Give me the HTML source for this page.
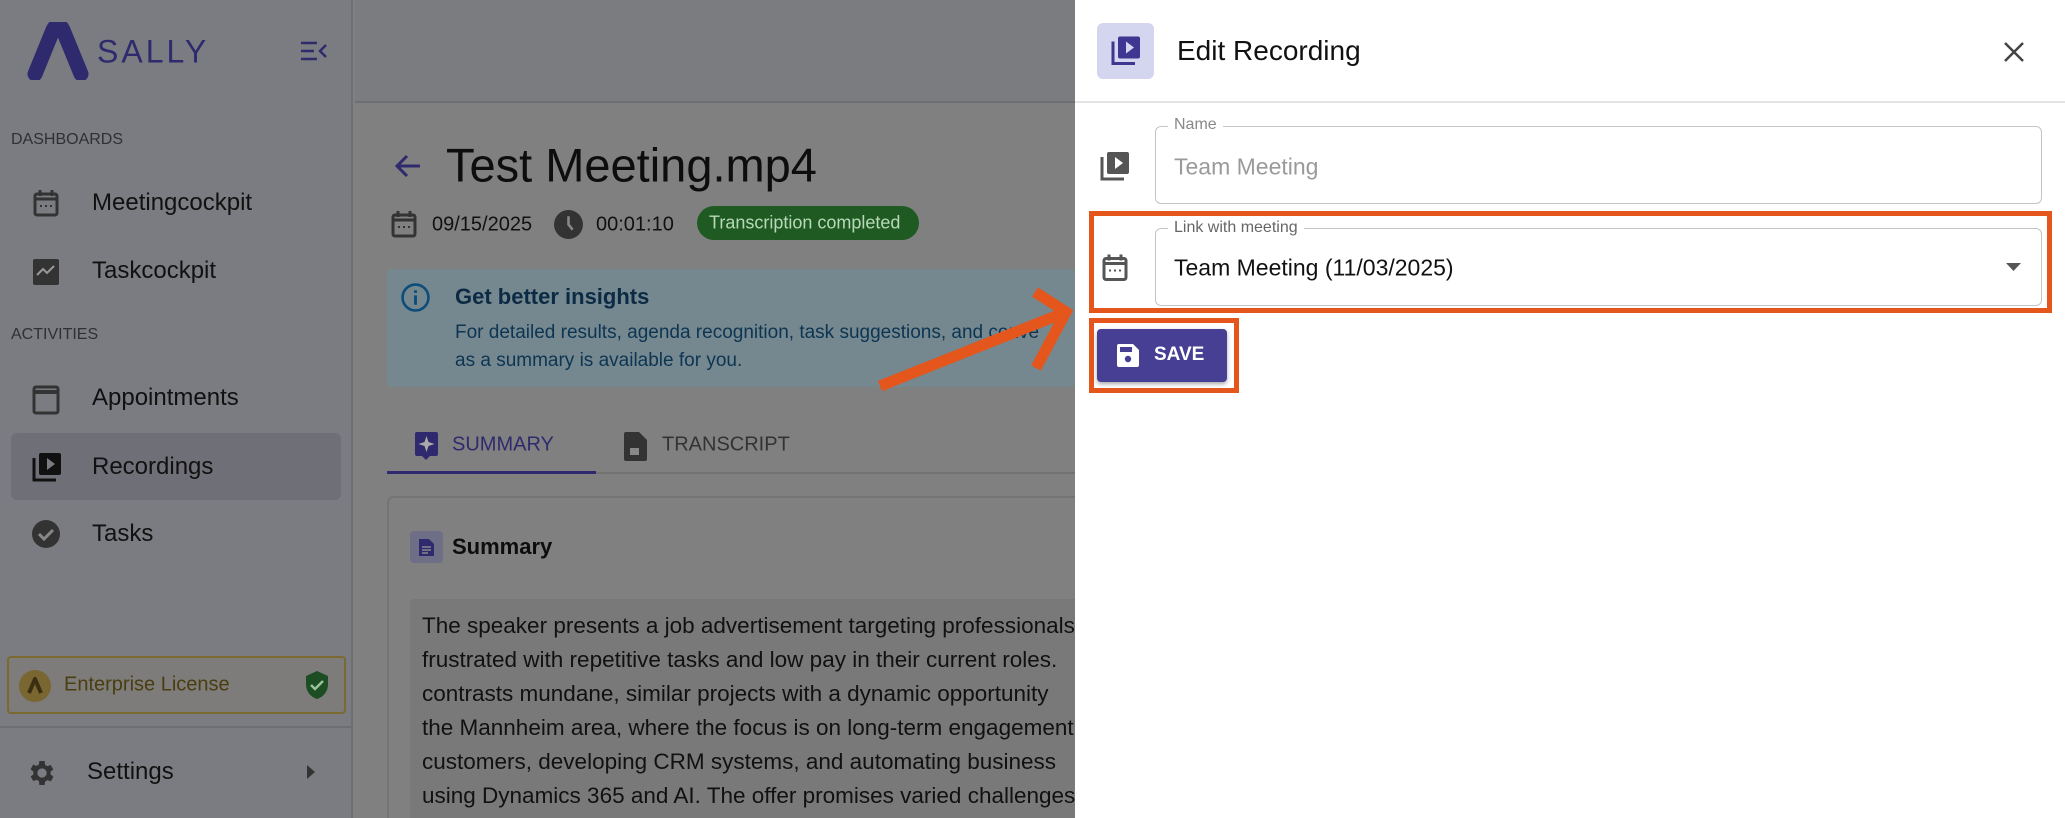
<!DOCTYPE html>
<html style="width:2065px;height:818px;overflow:hidden"><head><meta charset="utf-8"><style>
*{margin:0;padding:0;box-sizing:border-box}
body{width:2065px;height:818px;overflow:hidden;font-family:"Liberation Sans",sans-serif;background:#808080;position:relative}
.abs{position:absolute}
.side{left:0;top:0;width:353px;height:818px;background:#7b7c81;border-right:2px solid #6e6f72}
.top{left:355px;top:0;width:720px;height:103px;background:#7b7c80;border-bottom:2px solid #6e6f72}
.t{position:absolute;white-space:nowrap;transform:translateY(-50%)}
.nav{font-size:24px;color:#111}
.sec{font-size:16px;color:#2f3033}
.panel{left:1075px;top:0;width:990px;height:818px;background:#fff}
</style></head><body>
<div class="abs side"></div>
<div class="abs top"></div>
<svg class="abs" style="left:27px;top:22px" width="62" height="58" viewBox="0 0 62 58"><path d="M8 52 L26 8 Q31 -2 36 8 L54 52" fill="none" stroke="#2f2a6e" stroke-width="15" stroke-linecap="round" stroke-linejoin="round"/></svg>
<div class="t" style="left:97px;top:52px;font-size:32px;color:#2f2a6e;letter-spacing:3px">SALLY</div>
<svg class="abs" style="left:300px;top:41px" width="28" height="20" viewBox="0 0 28 20"><path d="M1 2h16M1 10h13M1 18h16M26 4l-6 6 6 6" stroke="#2f2a6e" stroke-width="2.5" fill="none"/></svg>
<div class="t sec" style="left:11px;top:140px">DASHBOARDS</div>
<svg class="abs" style="left:33px;top:189px" width="26" height="28" viewBox="0 0 26 28"><rect x="2" y="5" width="22" height="21" rx="2" fill="none" stroke="#333" stroke-width="3"/><path d="M7 1v6M19 1v6M2 10h22" stroke="#333" stroke-width="3"/><path d="M7 17h2M12 17h2M17 17h2" stroke="#333" stroke-width="2"/></svg>
<div class="t nav" style="left:92px;top:203px">Meetingcockpit</div>
<svg class="abs" style="left:33px;top:259px" width="26" height="26" viewBox="0 0 26 26"><rect width="26" height="26" rx="2" fill="#333"/><path d="M4 16l6-6 4 4 7-7" stroke="#999" stroke-width="2" fill="none"/></svg>
<div class="t nav" style="left:92px;top:271px">Taskcockpit</div>
<div class="t sec" style="left:11px;top:335px">ACTIVITIES</div>
<svg class="abs" style="left:32px;top:383px" width="28" height="32" viewBox="0 0 28 32"><rect x="2" y="4" width="24" height="26" rx="2" fill="none" stroke="#333" stroke-width="3"/><path d="M2 9h24" stroke="#333" stroke-width="4"/></svg>
<div class="t nav" style="left:92px;top:398px">Appointments</div>
<div class="abs" style="left:11px;top:433px;width:330px;height:67px;background:#6f6f78;border-radius:6px"></div>
<svg class="abs" style="left:32px;top:452px" width="30" height="30" viewBox="0 0 30 30"><path d="M2 6v22h22" stroke="#111" stroke-width="3" fill="none"/><rect x="7" y="1" width="22" height="22" rx="2" fill="#111"/><path d="M15 6l8 6-8 6z" fill="#7b7c81"/></svg>
<div class="t nav" style="left:92px;top:467px">Recordings</div>
<svg class="abs" style="left:32px;top:520px" width="28" height="28" viewBox="0 0 28 28"><circle cx="14" cy="14" r="14" fill="#333"/><path d="M7 14l5 5 9-9" stroke="#888" stroke-width="3" fill="none"/></svg>
<div class="t nav" style="left:92px;top:534px">Tasks</div>
<div class="abs" style="left:7px;top:656px;width:339px;height:58px;border:2px solid #7a6a30;border-radius:4px;background:#7d7c7a"></div>
<svg class="abs" style="left:19px;top:670px" width="32" height="32" viewBox="0 0 32 32"><circle cx="16" cy="16" r="16" fill="#7a6630"/><path d="M10 23l6-14 6 14" stroke="#3a2f10" stroke-width="4" fill="none" stroke-linejoin="round"/></svg>
<div class="t" style="left:64px;top:685px;font-size:20px;color:#4a3d10">Enterprise License</div>
<svg class="abs" style="left:305px;top:670px" width="24" height="30" viewBox="0 0 24 30"><path d="M12 1L1 6v8c0 8 5 13 11 15 6-2 11-7 11-15V6z" fill="#1d4d22"/><path d="M6 15l4 4 8-8" stroke="#9ac29c" stroke-width="2.5" fill="none"/></svg>
<div class="abs" style="left:0;top:726px;width:353px;height:2px;background:#6e6f72"></div>
<svg class="abs" style="left:26px;top:757px" width="32" height="32" viewBox="0 0 24 24"><path fill="#333" d="M19.4 13a7.5 7.5 0 000-2l2.1-1.6-2-3.5-2.5 1a7 7 0 00-1.7-1L15 3h-4l-.4 2.7a7 7 0 00-1.7 1l-2.5-1-2 3.5L6.6 11a7.5 7.5 0 000 2l-2.1 1.6 2 3.5 2.5-1a7 7 0 001.7 1L11 21h4l.4-2.7a7 7 0 001.7-1l2.5 1 2-3.5zM13 15.5a3.5 3.5 0 110-7 3.5 3.5 0 010 7z" transform="translate(-1 0)"/></svg>
<div class="t nav" style="left:87px;top:772px">Settings</div>
<svg class="abs" style="left:306px;top:764px" width="10" height="16" viewBox="0 0 10 16"><path d="M1 1l8 7-8 7z" fill="#333"/></svg>

<svg class="abs" style="left:394px;top:153px" width="28" height="26" viewBox="0 0 28 26"><path d="M26 13H4M13 3L3 13l10 10" stroke="#2f2a6e" stroke-width="3" fill="none"/></svg>
<div class="t" style="left:446px;top:165px;font-size:47px;color:#0d0d0d">Test Meeting.mp4</div>
<svg class="abs" style="left:391px;top:210px" width="26" height="28" viewBox="0 0 26 28"><rect x="2" y="5" width="22" height="21" rx="2" fill="none" stroke="#333" stroke-width="3"/><path d="M7 1v6M19 1v6M2 10h22" stroke="#333" stroke-width="3"/><path d="M7 17h2M12 17h2M17 17h2" stroke="#333" stroke-width="2"/></svg>
<div class="t" style="left:432px;top:225px;font-size:20px;color:#111">09/15/2025</div>
<svg class="abs" style="left:554px;top:210px" width="29" height="29" viewBox="0 0 28 28"><circle cx="14" cy="14" r="14" fill="#333"/><path d="M14 6v8l4 5" stroke="#888" stroke-width="2.5" fill="none"/></svg>
<div class="t" style="left:596px;top:225px;font-size:20px;color:#111">00:01:10</div>
<div class="abs" style="left:697px;top:206px;width:222px;height:34px;border-radius:17px;background:#1f5a22"></div>
<div class="t" style="left:709px;top:223px;font-size:18px;color:#b7d9b9">Transcription completed</div>
<div class="abs" style="left:387px;top:269px;width:688px;height:118px;background:#75878f;border-radius:4px"></div>
<svg class="abs" style="left:401px;top:283px" width="29" height="29" viewBox="0 0 28 28"><circle cx="14" cy="14" r="12.5" fill="none" stroke="#0d4d7a" stroke-width="2.5"/><path d="M14 12v9M14 7v2.5" stroke="#0d4d7a" stroke-width="2.8"/></svg>
<div class="t" style="left:455px;top:297px;font-size:22px;font-weight:bold;color:#0b2a44">Get better insights</div>
<div class="t" style="left:455px;top:333px;font-size:19px;color:#0d3552">For detailed results, agenda recognition, task suggestions, and conve</div>
<div class="t" style="left:455px;top:361px;font-size:19px;color:#0d3552">as a summary is available for you.</div>
<svg class="abs" style="left:414px;top:431px" width="25" height="30" viewBox="0 0 25 30"><path d="M3 1h19a2 2 0 012 2v20a2 2 0 01-2 2h-6l-4 4-4-4H3a2 2 0 01-2-2V3a2 2 0 012-2z" fill="#2f2a6e"/><path d="M12.5 5l2 6 6 2-6 2-2 6-2-6-6-2 6-2z" fill="#aaa"/></svg>
<div class="t" style="left:452px;top:445px;font-size:20px;color:#2f2a6e">SUMMARY</div>
<svg class="abs" style="left:624px;top:431px" width="24" height="30" viewBox="0 0 24 30"><path d="M2 1h13l8 8v19a2 2 0 01-2 2H2a2 2 0 01-2-2V3a2 2 0 012-2z" fill="#333"/><rect x="6" y="17" width="9" height="7" fill="#888"/></svg>
<div class="t" style="left:662px;top:445px;font-size:20px;color:#333">TRANSCRIPT</div>
<div class="abs" style="left:387px;top:472px;width:688px;height:2px;background:#737373"></div>
<div class="abs" style="left:387px;top:471px;width:209px;height:3px;background:#2f2a6e"></div>
<div class="abs" style="left:387px;top:496px;width:700px;height:322px;border:2px solid #747474;border-bottom:none;border-radius:6px 6px 0 0;background:#808080"></div>
<div class="abs" style="left:410px;top:531px;width:33px;height:32px;background:#6e6e86;border-radius:4px"></div>
<svg class="abs" style="left:418px;top:538px" width="17" height="19" viewBox="0 0 17 19"><path d="M1 1h10l5 5v12H1z" fill="#2f2a6e"/><path d="M4 9h9M4 12h9M4 15h6" stroke="#888" stroke-width="1.5"/></svg>
<div class="t" style="left:452px;top:547px;font-size:22px;font-weight:bold;color:#0d0d0d">Summary</div>
<div class="abs" style="left:410px;top:599px;width:680px;height:219px;background:#797979;border-radius:4px 4px 0 0"></div>
<div class="abs" style="left:422px;top:609px;font-size:22.5px;line-height:34px;color:#111;white-space:nowrap">The speaker presents a job advertisement targeting professionals<br>frustrated with repetitive tasks and low pay in their current roles.<br>contrasts mundane, similar projects with a dynamic opportunity<br>the Mannheim area, where the focus is on long-term engagement<br>customers, developing CRM systems, and automating business<br>using Dynamics 365 and AI. The offer promises varied challenges</div>

<svg class="abs" style="left:860px;top:280px" width="220" height="120" viewBox="860 280 220 120"><path d="M880 386L1066 312M1035 292L1066 312L1036 368" stroke="#e4561b" stroke-width="11" fill="none" stroke-linecap="butt"/></svg>

<div class="abs panel"></div>
<div class="abs" style="left:1097px;top:23px;width:57px;height:56px;background:#d4d6f0;border-radius:6px"></div>
<svg class="abs" style="left:1111px;top:35px" width="30" height="31" viewBox="0 0 30 30"><path d="M2 6v22h22" stroke="#3d3791" stroke-width="3" fill="none"/><rect x="7" y="1" width="22" height="22" rx="2" fill="#3d3791"/><path d="M15 6l8 6-8 6z" fill="#d4d6f0"/></svg>
<div class="t" style="left:1177px;top:51px;font-size:28px;color:#111">Edit Recording</div>
<svg class="abs" style="left:2003px;top:41px" width="22" height="22" viewBox="0 0 22 22"><path d="M2 2l18 18M20 2L2 20" stroke="#444" stroke-width="2.5"/></svg>
<div class="abs" style="left:1075px;top:101px;width:990px;height:2px;background:#e4e4e4"></div>

<svg class="abs" style="left:1100px;top:151px" width="30" height="30" viewBox="0 0 30 30"><path d="M2 6v22h22" stroke="#555" stroke-width="3" fill="none"/><rect x="7" y="1" width="22" height="22" rx="2" fill="#555"/><path d="M15 6l8 6-8 6z" fill="#fff"/></svg>
<div class="abs" style="left:1155px;top:126px;width:887px;height:78px;border:1.5px solid #c4c4c4;border-radius:6px"></div>
<div class="t" style="left:1168px;top:125px;font-size:16px;color:#888;background:#fff;padding:0 6px">Name</div>
<div class="t" style="left:1174px;top:167px;font-size:23px;color:#9a9a9a">Team Meeting</div>

<div class="abs" style="left:1089px;top:211px;width:963px;height:102px;border:5px solid #e4561b"></div>
<svg class="abs" style="left:1102px;top:253px" width="26" height="29" viewBox="0 0 26 28"><rect x="2" y="5" width="22" height="21" rx="2" fill="none" stroke="#555" stroke-width="3"/><path d="M7 1v6M19 1v6M2 10h22" stroke="#555" stroke-width="3"/><path d="M7 17h2M12 17h2M17 17h2" stroke="#555" stroke-width="2"/></svg>
<div class="abs" style="left:1155px;top:228px;width:887px;height:78px;border:1.5px solid #c4c4c4;border-radius:6px"></div>
<div class="t" style="left:1168px;top:228px;font-size:16px;color:#666;background:#fff;padding:0 6px">Link with meeting</div>
<div class="t" style="left:1174px;top:268px;font-size:23px;color:#111">Team Meeting (11/03/2025)</div>
<svg class="abs" style="left:2006px;top:263px" width="15" height="9" viewBox="0 0 15 9"><path d="M0 0h15L7.5 8z" fill="#555"/></svg>

<div class="abs" style="left:1089px;top:318px;width:150px;height:75px;border:5px solid #e4561b"></div>
<div class="abs" style="left:1097px;top:329px;width:130px;height:53px;background:#463f93;border-radius:4px;box-shadow:0 2px 4px rgba(0,0,0,.35)"></div>
<svg class="abs" style="left:1117px;top:344px" width="22" height="23" viewBox="0 0 22 23"><path d="M2 0h14l6 6v15a2 2 0 01-2 2H2a2 2 0 01-2-2V2a2 2 0 012-2z" fill="#fff"/><rect x="3" y="3" width="12" height="5" fill="#463f93"/><circle cx="11" cy="15" r="3.2" fill="#463f93"/></svg>
<div class="t" style="left:1154px;top:355px;font-size:19px;font-weight:bold;color:#fff">SAVE</div>
</body></html>
